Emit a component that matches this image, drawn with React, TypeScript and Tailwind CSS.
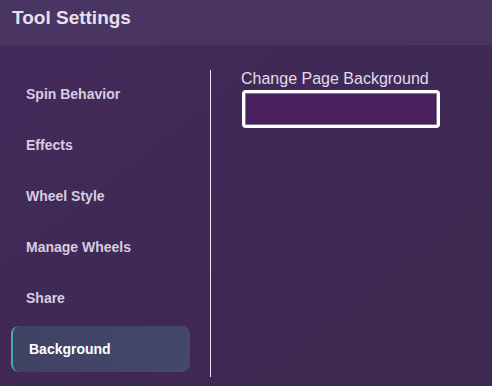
export default function App() {
  const items = ['Spin Behavior', 'Effects', 'Wheel Style', 'Manage Wheels', 'Share', 'Background']
  const active = 'Background'

  return (
    <div
      className="flex h-[386px] w-[492px] flex-col overflow-hidden bg-gradient-to-br from-[#442a5b] to-[#3c2850] text-[#ddd5e6]"
      style={{ fontFamily: '"Liberation Sans", Arial, sans-serif' }}
    >
      <div className="flex h-[45px] shrink-0 items-start bg-[#4a3461] px-[12px] pt-[4px]">
        <h1 className="text-[19px] font-bold text-[#e6e0ee]">Tool Settings</h1>
      </div>

      <div className="flex flex-1 pl-[11px] pt-[26px]">
        <nav className="flex w-[179px] flex-col gap-[5px]">
          {items.map((item) =>
            item === active ? (
              <div
                key={item}
                className="flex h-[46px] items-center rounded-[8px] border-l-2 border-[#4fa8a8] bg-gradient-to-r from-[#3f4263] to-[#44486a] pl-[16px] text-[14px] font-bold text-white"
              >
                {item}
              </div>
            ) : (
              <div key={item} className="flex h-[46px] items-center pl-[15px] text-[14px] font-bold text-[#d6cde0]">
                {item}
              </div>
            )
          )}
        </nav>

        <div className="-mt-[1px] ml-[20px] mb-[9px] w-px bg-[#e8e0f0]" />

        <div className="-mt-[1px] flex flex-col pl-[30px]">
          <label className="text-[16px] leading-[18px] text-[#e2dbea]">Change Page Background</label>
          <div className="ml-[1px] mt-[2px] h-[38px] w-[198px] rounded-[4px] bg-white p-[3px]">
            <div className="h-full w-full border border-[#8a7a96] bg-[#4a1f5d]" />
          </div>
        </div>
      </div>
    </div>
  )
}
